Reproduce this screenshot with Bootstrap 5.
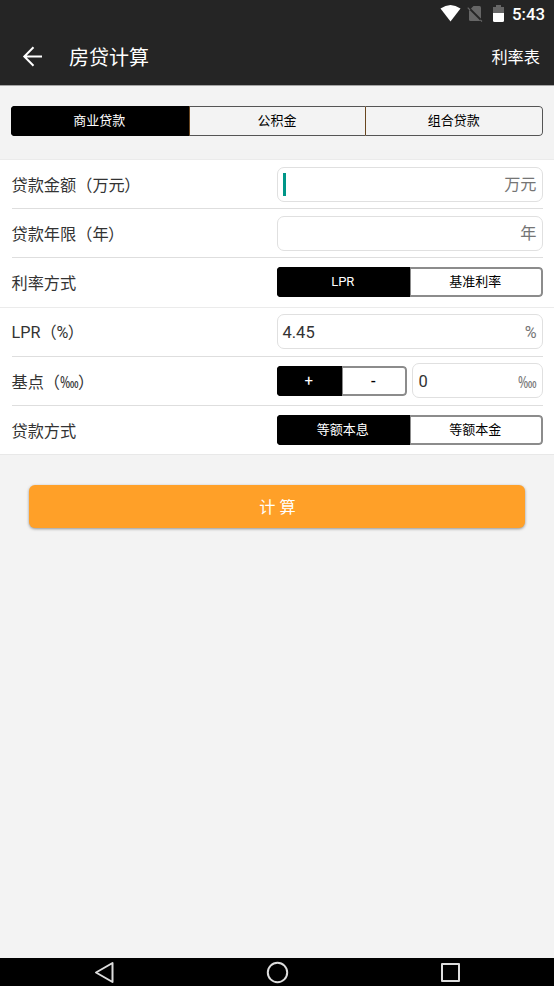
<!DOCTYPE html>
<html lang="zh-CN">
<head>
<meta charset="utf-8">
<meta name="viewport" content="width=device-width, initial-scale=1">
<title>房贷计算</title>
<link href="https://cdn.jsdelivr.net/npm/bootstrap@5.3.0/dist/css/bootstrap.min.css" rel="stylesheet">
<style>
body{font-family:Roboto,"Noto Sans CJK SC",sans-serif;background:#f3f3f3;color:#333;font-size:16.2px;line-height:24px}
svg{display:block}
.screen{height:986px;overflow:hidden}
.statusbar{height:28px;background:#252525;padding-right:9px;font-size:16.8px;font-weight:500}
.appbar{height:57px;background:#252525;padding:1px 14px 0 22px}
.appbar h1{font-size:20px;font-weight:400;line-height:28px;margin-left:26px;padding-top:1px}
.rate-link{padding-top:1px}
.tabs-area{padding:20px 11px 23px 11px;border-top:1px solid #a5a5a5;height:74px}
.seg{height:30px;border-radius:4px;overflow:hidden;background:#fff}
.seg .btn{flex:1 1 0;padding:0 1px 0 0;border:2px solid #8c8c8c;border-radius:0;color:#000;font-size:13px;font-weight:400;line-height:26px}
.seg .btn.active{background:#000;border-color:#000;color:#fff;font-weight:400}
.seg .btn+.btn{border-left-width:1px}
.seg .btn:last-child{border-radius:0 4px 4px 0}
.seg-top{background:#f3f3f3}
.seg-top .btn{border:1px solid #555;border-left-color:#69461f;line-height:28px}
.seg-top .btn:nth-child(2){border-right:0}
.panel{background:#fff;border-top:1px solid #ebebeb;padding:0 11.5px}
.panel-end{border-bottom:1px solid #e8e8e8}
.field-row{height:49.2px;border-bottom:1px solid #dedede}
.field-row:last-child{border-bottom:0;height:48.2px}
.field-label{padding-top:3px}
.close-paren{margin-left:-.7px}
.close-tight{margin-left:-.5px}
.control{width:266px}
.field{height:35px;border:1px solid #e0e0e0;border-radius:7px;padding:0 5px 0 5px;background:#fff}
.unit{color:#757575;padding-top:2px}
.caret{width:3px;height:23px;background:#009688}
.value{font-size:16.5px;padding-top:2px}
.stepper{width:130px;flex:none}
.stepper .btn{font-size:15px;font-weight:500}
.stepper+.field{margin-left:5px;padding-left:6px}
.permyriad{display:inline-block;width:18.5px;font-family:"Noto Sans",sans-serif;font-weight:400;transform:scaleX(.75);transform-origin:0 50%;white-space:nowrap}
.submit{height:43px;margin:30px 29px 0;padding:8px 0 4px 1px;background:#ffa028;color:#fff;border:0;border-radius:6px;box-shadow:0 1px 3px rgba(0,0,0,.4);font-size:16.2px}
.submit:hover{background:#ffa028;color:#fff}
.navkeys{height:28px;background:#000}
</style>
</head>
<body>
<div class="screen d-flex flex-column">
  <div class="statusbar d-flex align-items-center justify-content-end text-white">
    <svg width="72" height="28" viewBox="0 0 72 28">
      <path d="M.5 8.6Q10.5 1.4 20.5 8.6L10.5 21.5Z" fill="#fff"/>
      <path d="M33.5 6H39.5Q41 6 41 7.5V19.5Q41 21 39.5 21H30.5Q29 21 29 19.5V10.5Z" fill="#666"/>
      <path d="M29 8L41.5 20.5" stroke="#252525" stroke-width="1.8"/>
      <path d="M27.7 7.7L30 10M40.3 19.8L42 21.5" stroke="#666" stroke-width="1.2"/>
      <path d="M53 7H56V5H61V7H64V13H53Z" fill="#666"/>
      <path d="M53 13H64V20.5Q64 22 62.5 22H54.5Q53 22 53 20.5Z" fill="#fff"/>
    </svg>
    <span>5:43</span>
  </div>
  <header class="appbar d-flex align-items-center text-white">
    <svg width="21" height="22" viewBox="0 0 21 22" fill="none" stroke="#fff" stroke-width="2"><path d="M20 10.5H2.5M11.5 1.3L2.3 10.5L11.5 19.7"/></svg>
    <h1 class="mb-0">房贷计算</h1>
    <span class="rate-link ms-auto">利率表</span>
  </header>
  <div class="tabs-area">
    <div class="seg seg-top d-flex">
      <button class="btn active">商业贷款</button><button class="btn">公积金</button><button class="btn">组合贷款</button>
    </div>
  </div>
  <section class="panel">
    <div class="field-row d-flex align-items-center justify-content-between">
      <span class="field-label">贷款金额（万元<span class="close-paren">）</span></span>
      <div class="control field d-flex align-items-center justify-content-between"><span class="caret"></span><span class="unit">万元</span></div>
    </div>
    <div class="field-row d-flex align-items-center justify-content-between">
      <span class="field-label">贷款年限（年<span class="close-paren">）</span></span>
      <div class="control field d-flex align-items-center justify-content-end"><span class="unit">年</span></div>
    </div>
    <div class="field-row d-flex align-items-center justify-content-between">
      <span class="field-label">利率方式</span>
      <div class="control seg d-flex"><button class="btn active">LPR</button><button class="btn">基准利率</button></div>
    </div>
  </section>
  <section class="panel panel-end">
    <div class="field-row d-flex align-items-center justify-content-between">
      <span class="field-label">LPR（%<span class="close-paren">）</span></span>
      <div class="control field d-flex align-items-center justify-content-between"><span class="value">4.45</span><span class="unit">%</span></div>
    </div>
    <div class="field-row d-flex align-items-center justify-content-between">
      <span class="field-label">基点（<span class="permyriad">‱</span><span class="close-tight">）</span></span>
      <div class="control d-flex align-items-center">
        <div class="stepper seg d-flex"><button class="btn active">+</button><button class="btn">-</button></div>
        <div class="field flex-fill d-flex align-items-center justify-content-between"><span class="value">0</span><span class="unit permyriad">‱</span></div>
      </div>
    </div>
    <div class="field-row d-flex align-items-center justify-content-between">
      <span class="field-label">贷款方式</span>
      <div class="control seg d-flex"><button class="btn active">等额本息</button><button class="btn">等额本金</button></div>
    </div>
  </section>
  <button class="btn submit">计 算</button>
  <nav class="navkeys mt-auto d-flex justify-content-center">
    <svg width="554" height="28" viewBox="0 0 554 28" fill="none" stroke="#ddd" stroke-width="2" stroke-linejoin="round">
      <path d="M112.5 5V24L96 14.5Z"/><circle cx="277.5" cy="14.5" r="9.7"/><rect x="442" y="6" width="17" height="17"/>
    </svg>
  </nav>
</div>
<script src="https://cdn.jsdelivr.net/npm/bootstrap@5.3.0/dist/js/bootstrap.bundle.min.js"></script>
</body>
</html>
